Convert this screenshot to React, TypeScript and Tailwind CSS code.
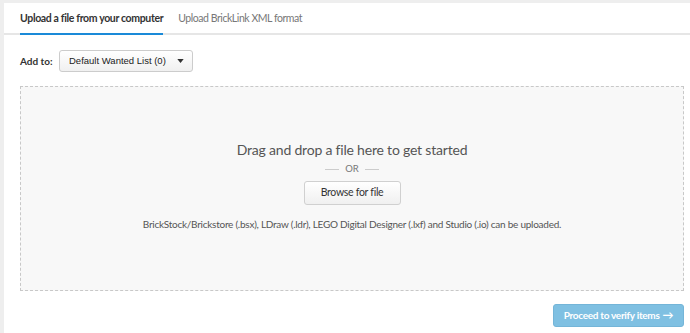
import React from "react";

const font = { fontFamily: "Lato, 'Open Sans', Arial, sans-serif" };

const App = () => {
  return (
    <div className="w-[690px] h-[333px] bg-[#eeeeee] pl-[4px] pt-[3px] overflow-hidden" style={font}>
      <div className="bg-white h-full flex flex-col">
        {/* tabs */}
        <div className="flex h-[32px] border-b-2 border-[#e6e6e6] px-[16px]">
          <div className="pt-[2px] flex items-center text-[10.5px] tracking-[-0.35px] font-bold text-[#333] border-b-2 border-[#1a8ad8] -mb-[2px] whitespace-nowrap">
            Upload a file from your computer
          </div>
          <div className="ml-[15px] pt-[2px] flex items-center text-[10.5px] tracking-[-0.45px] text-[#777] whitespace-nowrap">
            Upload BrickLink XML format
          </div>
        </div>

        <div className="pl-[16px] pr-[6px] flex flex-col">
          <div className="flex items-center mt-[15px]">
            <span className="text-[10px] font-bold text-[#333] w-[39px] whitespace-nowrap">Add to:</span>
            <div
              className="w-[134px] h-[22px] border border-[#cccccc] rounded-[3px] bg-gradient-to-b from-white to-[#f0f0f0] flex items-center pl-[9px] pr-[8px] text-[9.5px] text-[#222] whitespace-nowrap"
              style={{ fontFamily: "'Liberation Sans', Arial, sans-serif" }}
            >
              <span className="flex-1">Default Wanted List (0)</span>
              <svg width="7" height="4" viewBox="0 0 8 5">
                <path d="M0 0 L8 0 L4 5 Z" fill="#333" />
              </svg>
            </div>
          </div>

          <div className="mt-[14px] h-[205px] border border-dashed border-[#c8c8c8] bg-[#f8f8f8] flex flex-col items-center pt-[53px]">
            <div className="text-[14px] tracking-[-0.2px] text-[#555] leading-[20px] whitespace-nowrap">
              Drag and drop a file here to get started
            </div>
            <div className="mt-[3px] flex items-center gap-[6px] text-[9.5px] text-[#777] leading-[12px]">
              <span className="w-[14px] h-px bg-[#ccc]" />
              <span>OR</span>
              <span className="w-[14px] h-px bg-[#ccc]" />
            </div>
            <button className="mt-[6px] w-[97px] h-[24px] border border-[#d0d0d0] rounded-[3px] bg-gradient-to-b from-white to-[#f0f0f0] text-[10.5px] tracking-[-0.3px] text-[#333] whitespace-nowrap">
              Browse for file
            </button>
            <div className="mt-[12px] text-[10px] tracking-[-0.25px] text-[#555] whitespace-nowrap">
              BrickStock/Brickstore (.bsx), LDraw (.ldr), LEGO Digital Designer (.lxf) and Studio (.io) can be uploaded.
            </div>
          </div>

          <div className="flex justify-end mt-[13px]">
            <button className="w-[131px] h-[23px] rounded-[3px] bg-[#7fc0e2] border border-[#74b5d8] text-white text-[10px] tracking-[-0.3px] font-bold flex items-center justify-center gap-[3px] whitespace-nowrap">
              Proceed to verify items
              <span className="text-[11px] font-bold">&#8594;</span>
            </button>
          </div>
        </div>
      </div>
    </div>
  );
};

export default App;
